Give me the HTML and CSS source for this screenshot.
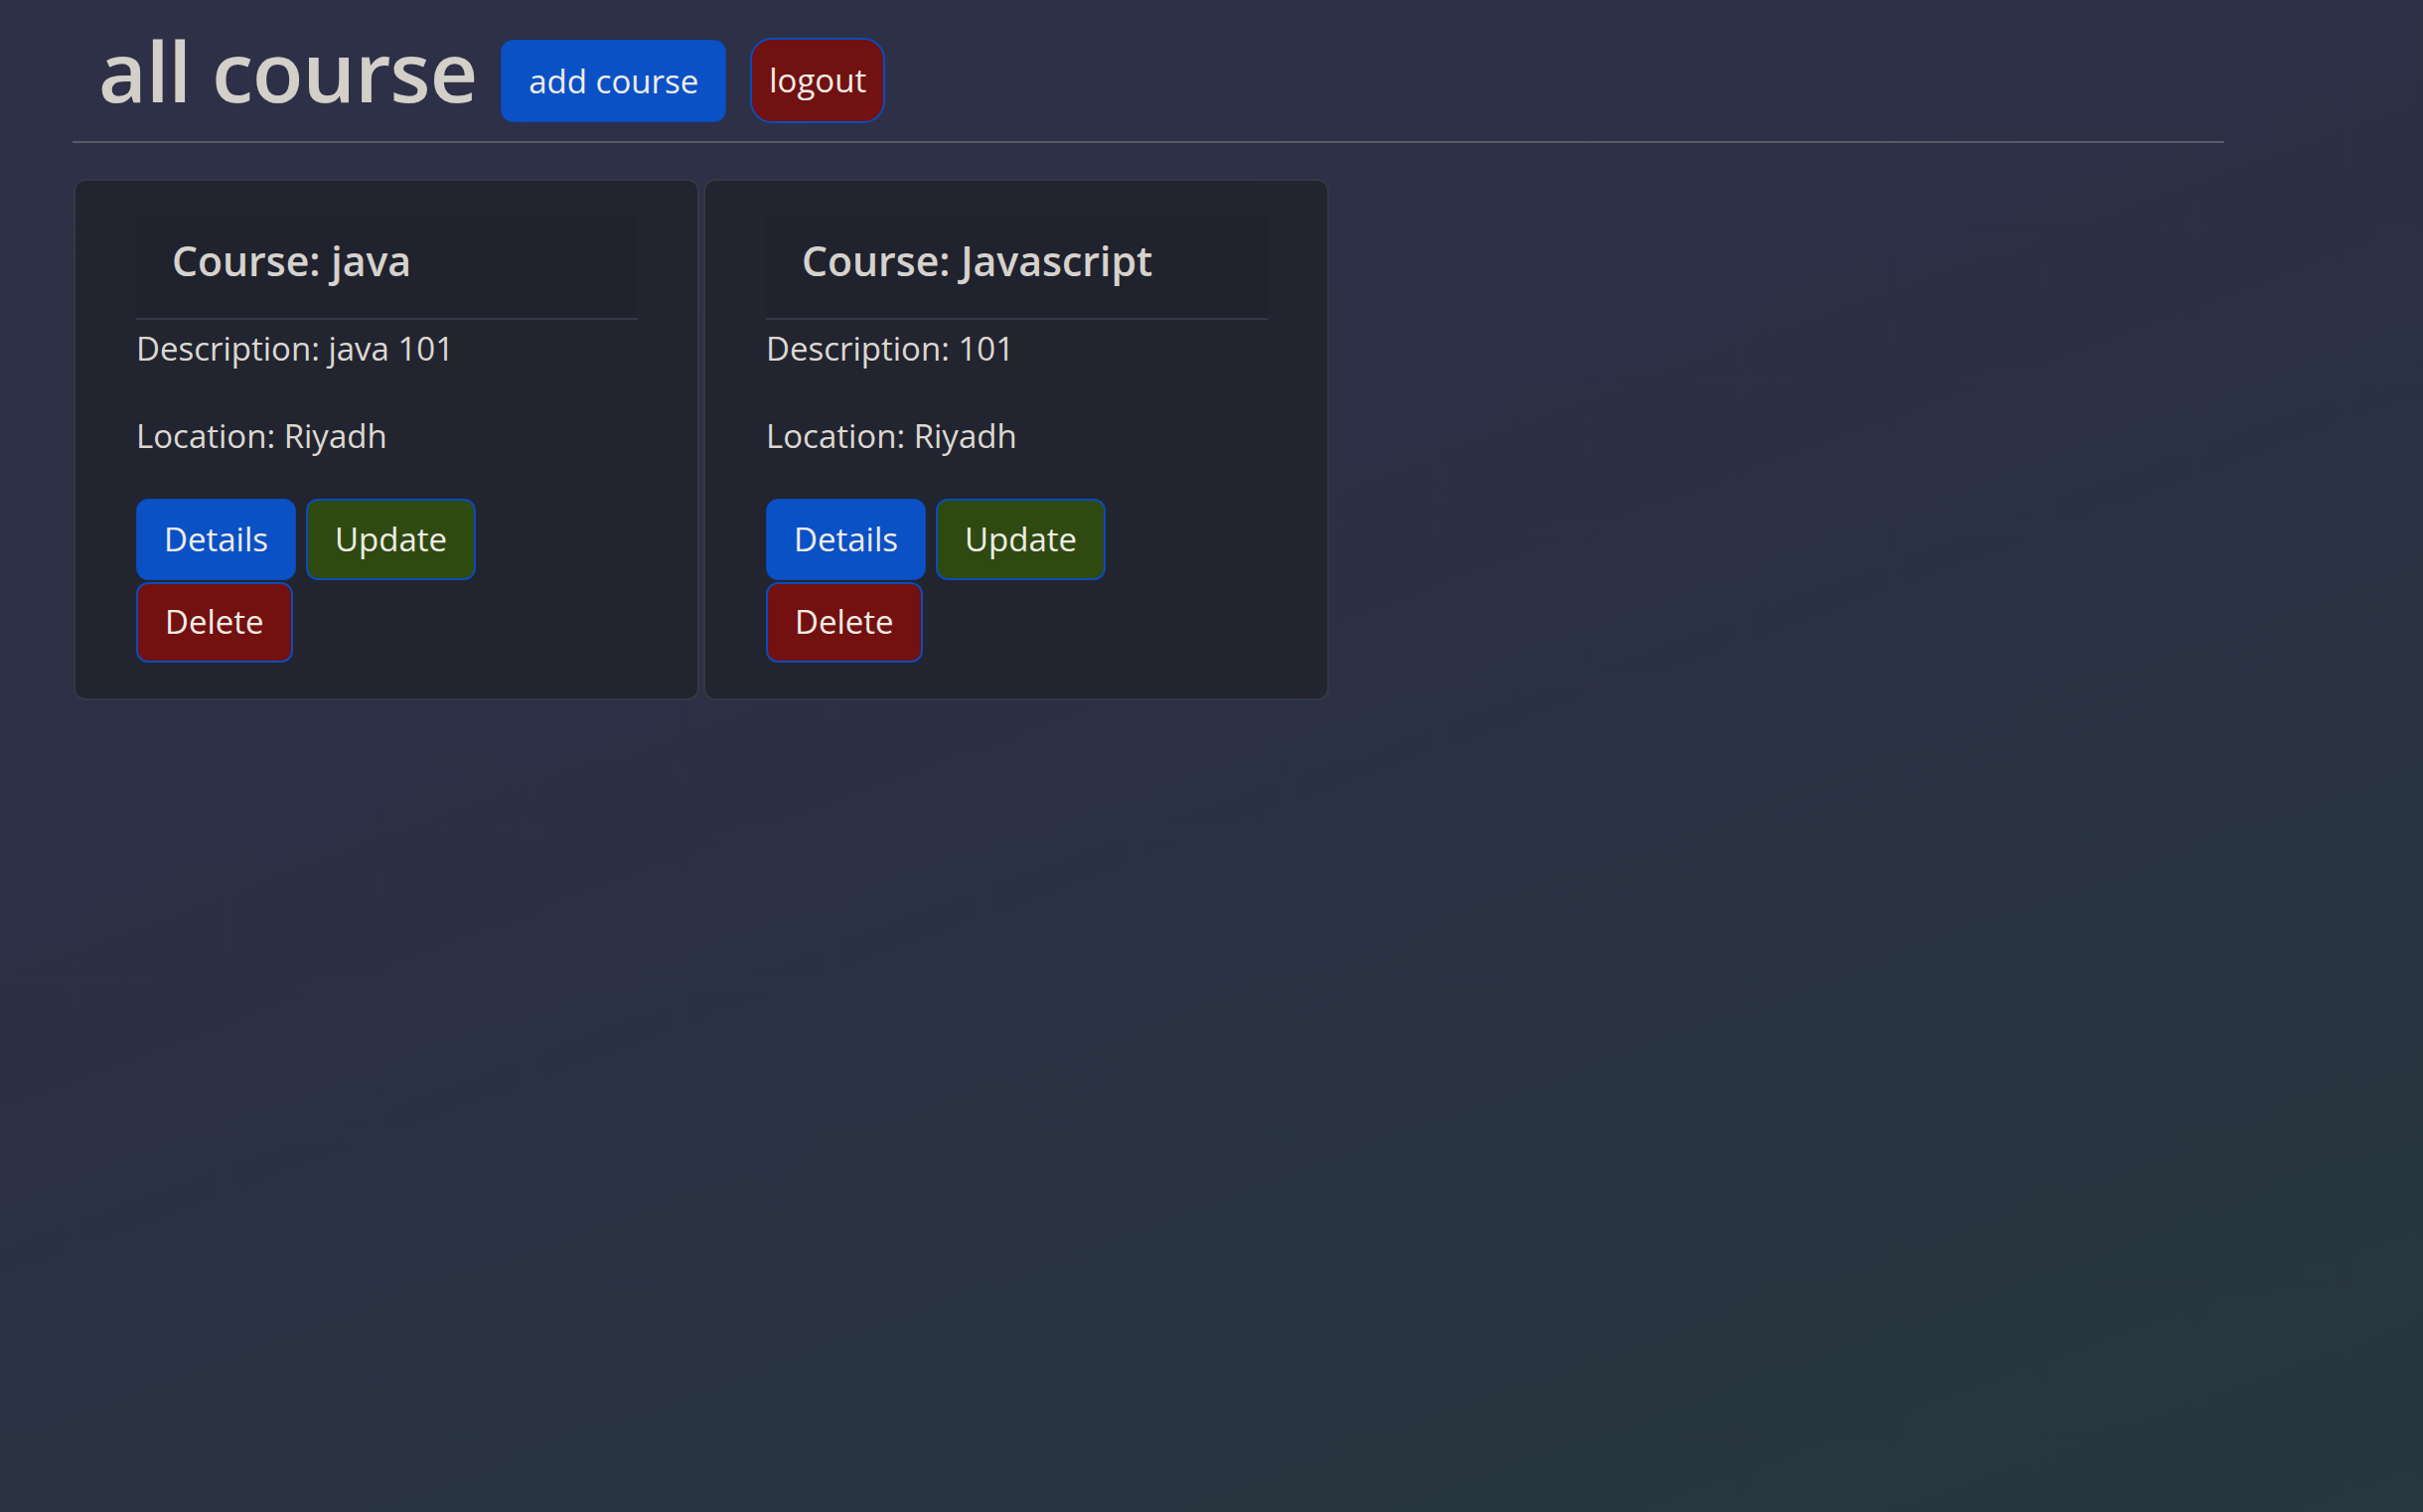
FILE: index.html
```html
<!DOCTYPE html>
<html lang="en">
<head>
<meta charset="utf-8">
<title>all course</title>
<link rel="stylesheet" href="styles.css">
</head>
<body>
<div class="page">
  <header class="topbar">
    <h1 class="title">all course</h1>
    <a class="btn btn-add">add course</a>
    <a class="btn btn-logout">logout</a>
  </header>
  <main class="cards">
    <section class="card">
      <div class="card-header"><h2 class="card-title">Course: java</h2></div>
      <p class="line first">Description: java 101</p>
      <p class="line">Location: Riyadh</p>
      <div class="actions">
        <a class="btn btn-details">Details</a>
        <a class="btn btn-update">Update</a>
      </div>
      <div class="actions second">
        <a class="btn btn-delete">Delete</a>
      </div>
    </section>
    <section class="card">
      <div class="card-header"><h2 class="card-title">Course: Javascript</h2></div>
      <p class="line first">Description: 101</p>
      <p class="line">Location: Riyadh</p>
      <div class="actions">
        <a class="btn btn-details">Details</a>
        <a class="btn btn-update">Update</a>
      </div>
      <div class="actions second">
        <a class="btn btn-delete">Delete</a>
      </div>
    </section>
  </main>
</div>
</body>
</html>
```

FILE: styles.css
```css
html, body {
  margin: 0;
  padding: 0;
  min-height: 100%;
}
body {
  min-height: 1522px;
  background: linear-gradient(160deg, #2e3048 0%, #2c3045 45%, #283540 80%, #26373f 100%);
  font-family: "Open Sans", "Noto Sans", sans-serif;
  color: #dcd8d1;
}
.page {
  margin-left: 73px;
  width: 2166px;
}
.topbar {
  display: flex;
  align-items: flex-start;
  padding: 0 0 18px 26px;
  border-bottom: 2px solid #585b69;
}
.title {
  margin: 29px 24px 0 0;
  font-size: 84px;
  line-height: 84px;
  font-weight: 600;
  color: #d3cfc9;
  letter-spacing: -0.8px;
}
.btn {
  display: inline-block;
  font-size: 33px;
  line-height: 50px;
  color: #f0ece6;
  text-decoration: none;
  white-space: nowrap;
  box-sizing: border-box;
}
.btn-add {
  margin-top: 40px;
  margin-right: 24px;
  padding: 16px 27px;
  line-height: 49px;
  background: #0b51c6;
  border: 1px solid #0a49b4;
  border-radius: 12px;
}
.btn-logout {
  margin-top: 38px;
  padding: 16px 17px;
  background: #721111;
  border: 2px solid #0a4cbb;
  border-radius: 22px;
}
.cards {
  display: flex;
  gap: 4px;
  margin-top: 36px;
  padding-left: 1px;
}
.card {
  width: 630px;
  box-sizing: border-box;
  padding: 36px 60px 36px 61px;
  background: #222430;
  border: 2px solid #353743;
  border-radius: 12px;
}
.card-header {
  padding: 20px 36px 33px;
  background: rgba(0, 0, 0, 0.03);
  border-bottom: 2px solid #363847;
}
.card-title {
  margin: 0;
  font-size: 41px;
  line-height: 49px;
  font-weight: 600;
  color: #d6d2cc;
}
.line {
  margin: 0 0 38px;
  font-size: 33px;
  line-height: 50px;
  color: #dcd8d1;
}
.line.first {
  margin-top: 4px;
}
.actions {
  display: flex;
  gap: 10px;
}
.actions.second {
  margin-top: 2px;
}
.btn-details {
  padding: 15px 27px;
  background: #0b51c6;
  border: 1px solid #0a49b4;
  border-radius: 12px;
}
.btn-update {
  padding: 14px 27px;
  background: #2e4a10;
  border: 2px solid #0a4cbb;
  border-radius: 12px;
}
.btn-delete {
  padding: 13px 27px 14px;
  background: #731010;
  border: 2px solid #0a4cbb;
  border-radius: 12px;
}
```
